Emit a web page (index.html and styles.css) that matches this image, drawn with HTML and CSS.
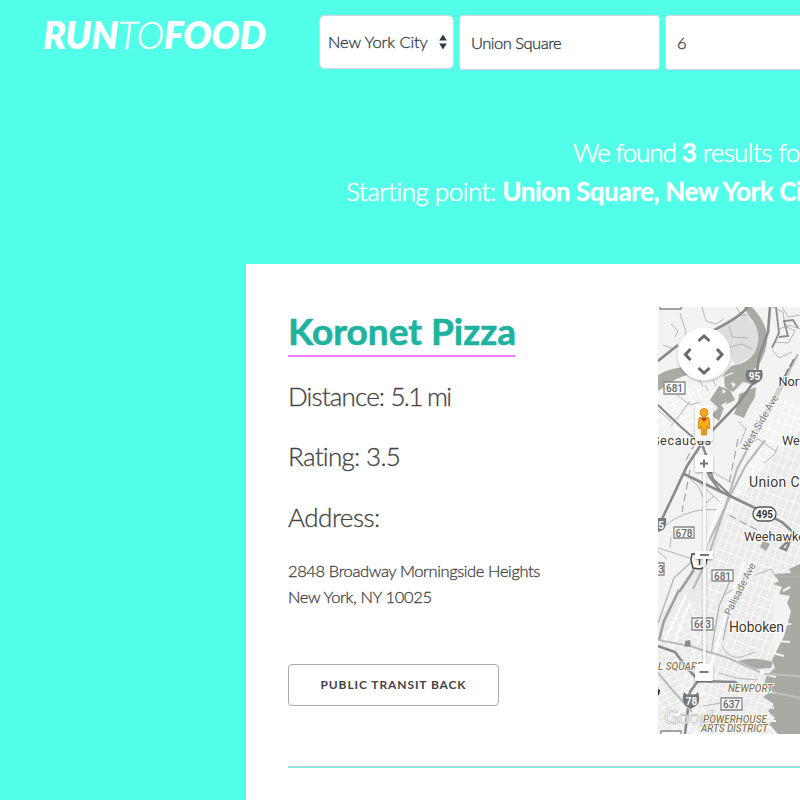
FILE: index.html
```html
<!DOCTYPE html>
<html lang="en">
<head>
<meta charset="utf-8">
<title>RunToFood</title>
<link rel="stylesheet" href="styles.css">
</head>
<body>
<header class="topbar">
  <a class="logo"><b>RUN</b><span>TO</span><b>FOOD</b></a>
  <form class="search">
    <div class="field city"><span class="t-city">New York City</span>
      <svg class="arrows" width="8" height="16" viewBox="0 0 8 16"><path d="M4 0.5 7.8 6.5H.2zM4 15.5 7.8 9.500H.2z"/></svg>
    </div>
    <div class="field start"><span class="t-start">Union Square</span></div>
    <div class="field miles"><span>6</span></div>
  </form>
</header>
<section class="summary">
  <p class="found">We found <b>3</b><span> results for</span></p>
  <p class="point"><span>Starting point: </span><b>Union Square, New York City</b></p>
</section>
<main class="card">
  <article class="result">
    <div class="info">
      <h2>Koronet Pizza</h2>
      <p class="row distance">Distance: <span>5.1 mi</span></p>
      <p class="row rating">Rating: 3.5</p>
      <p class="row label">Address:</p>
      <address><span class="street">2848 Broadway Morningside Heights</span><br><span class="zip">New York, NY 10025</span></address>
      <a class="button">PUBLIC TRANSIT BACK</a>
    </div>
    <svg class="map" width="142" height="427" viewBox="658 307 142 427">
      <defs>
        <pattern id="grid" width="7" height="10" patternUnits="userSpaceOnUse" patternTransform="rotate(20)"><path d="M0 0V10M0 0H7" fill="none" stroke="#fff" stroke-width="1.5"/></pattern>
        <pattern id="grid2" width="9" height="6" patternUnits="userSpaceOnUse" patternTransform="rotate(-28)"><path d="M0 0V6M0 0H9" fill="none" stroke="#fff" stroke-width="1.3"/></pattern>
        <filter id="shadow" x="-30%" y="-30%" width="160%" height="160%"><feDropShadow dx="0" dy="1" stdDeviation="1.2" flood-opacity=".35"/></filter>
      </defs>
      <rect x="658" y="307" width="142" height="427" fill="#f3f3f3"/>
      <path fill="#ebebeb" d="M735 500 800 430V560L775 590 772 734H658V620L700 560z"/>
      <path fill="url(#grid)" d="M740 470 775 400H800V560L775 590 772 734H672L700 600z"/>
      <path fill="url(#grid2)" d="M658 390 700 385 715 400 690 435 658 425zM658 630 695 600 710 734H658z"/>
      <path fill="#dedede" d="M716 327 743 311 757 327 759 345 752 356 735 366 728 348z"/>
      <!-- water -->
      <path fill="#a9aaa3" d="M744 307H752Q769 325 767 343 763 366 747 375L733 372 722 377 731 366Q752 363 757 347 762 330 749 316z"/>
      <path fill="#a9aaa3" d="M658 375Q670 368 684 367L690 374Q676 378 669 384L658 391z"/>
      <path fill="#a9aaa3" d="M724 377 737 372 746 379 733 392 725 387zM739 394 756 387 755 397 748 409 744 418 734 414 738 404zM719 386 730 390 735 400 725 405 719 421 711 415 718 408 710 400zM731 370l16 3 7 12-14-4z"/>
      <path fill="#f2f2f2" d="M722 389l4 2-3 3zM731 382l5 2-3 4zM721 405l6-3-2 8zM739 389l4-2 1 6z"/>
      <path fill="#a9aaa3" d="M800 564 789 569 791 573 774 574 779 581 773 584 782 587 779 594 790 596 787 603 791 611 788 622 784 636 779 646 772 660 775 668 767 675 764 684 770 692 763 697 774 704 768 711 775 718 769 724 778 734H800z"/>
      <path fill="#a9aaa3" d="M738 661Q753 656 773 662L771 668 756 669zM763 541 770 544 766 551 760 547z"/>
      <path fill="none" stroke="#f2f2f2" stroke-width="2.200" d="M783 591 790 587M778 641 790 642M773 653 784 656M764 674 776 677M762 690 776 693M764 706 774 708M765 721 776 721M781 612h8M784 624h7"/>
      <path fill="none" stroke="#bfc0bb" stroke-width="2" d="M764 674 800 676M772 692 800 698"/>
      <!-- minor roads -->
      <g fill="none" stroke="#b5b5b5" stroke-width="1">
        <path d="M671 324 678 331 675 337M663 345 674 349M680 313 686 332 684 340M702 307 706 321 716 324 724 319M729 326 732 337 748 338M727 348 742 344 752 349M772 350 779 358 792 352M705 385 708 391M713 380 716 386"/>
        <path d="M671 426 682 412 690 401M658 410 671 421M677 395 690 405 700 402M697 375 703 387M658 531 673 520Q695 507 718 510M658 548 671 552 698 561M671 537 670 548M658 551 667 559M685 474 698 486 706 503 714 496M693 477 722 504M711 471 732 483"/>
        <path d="M736 307 742 316 751 313M772 307 783 312 785 326 795 331 788 343 774 342M779 329 789 325 800 329M782 307 788 317 800 315M738 421 746 429 740 444M751 444 758 439 777 452M764 463 774 455 778 446"/>
        <path d="M755 575 771 569 776 577 800 576M724 595 744 583 752 571M722 645Q728 660 742 657L755 652M719 673 736 678 758 680M703 706 721 703 743 707"/>
      </g>
      <path fill="none" stroke="#8c8c8c" stroke-width="1.800" d="M776 307 779 333 772 348M779 337 788 336 784 321 793 320 798 328"/>
      <path fill="none" stroke="#a4a4a4" stroke-width="1.200" stroke-dasharray="8 4" d="M690 470 682 512M686 460 696 442M738 439 729 484M729 515 757 530"/>
      <!-- rail and avenues -->
      <g fill="none" stroke="#b9b9b9" stroke-width="2.200">
        <path d="M798 354 780 388 756 433 737 469 726 505 707 560 693 589"/>
        <path stroke="#d0d0d0" stroke-width="5" d="M789 370 777 394 752 440"/>
        <path d="M765 440 746 465 731 494 718 523 701 557 681 590"/>
        <path stroke="#fff" stroke-width="2" d="M724 492 711 530 699 568M745 562 728 607 707 678M686 595 664 642M690 602 669 655"/>
        <path stroke-width="1.500" d="M750 566 731 604 723 640M732 576 719 606 711 654M658 623 674 578 699 555"/>
      </g>
      <path fill="none" stroke="#777" stroke-width="1.500" stroke-dasharray="9 2" d="M794 359 788 370 781 384"/>
      <!-- highways -->
      <g fill="none" stroke="#8a8a8a" stroke-width="2.600">
        <path d="M658 361 678 345M703 335Q736 321 748 307M770 307 768 332 759 357 756 379 737 405 706 437 687 466 673 496 660 523"/>
        <path stroke-width="2.200" d="M658 405 681 427 703 446 713 479 729 494M700 440 707 457 709 476 721 492"/>
        <path d="M684 474 707 485 728 495 755 508 782 522 795 534 787 542 781 548 786 550 790 541 785 537"/>
        <path d="M658 646 675 652 686 667 699 681 735 682 745 689M700 678 690 692 685 734"/>
        <path stroke="#a0a0a0" d="M679 590 664 621 659 640M694 570 679 592"/>
        <path stroke="#bbb" stroke-width="2" d="M658 640 690 646 728 658 760 672M658 673 675 693 692 712"/>
      </g>
      <path fill="#8d8d87" d="M685 641l5-1 1 6-6 1z"/>
      <!-- road shields -->
      <g class="shield">
        <g fill="#fafafa" stroke="#888" stroke-width="1.300"><path d="M660 300h21v9h-21zM664 382h21v12h-21zM674 527h20v11h-20zM712 570h21v11h-21zM692 618h21v12h-21zM721 698h21v12h-21zM650 563h14v12h-14zM661 731h20v10h-20z"/></g>
        <text x="674.500" y="392">681</text><text x="684" y="536.500">678</text><text x="722.500" y="579.500">681</text><text x="702.500" y="628">663</text><text x="731.500" y="708">637</text><text x="661" y="573">3</text>
        <rect x="753" y="507" width="23" height="14" rx="7" fill="#fff" stroke="#555" stroke-width="1.300"/><text class="dark" x="764.500" y="517.500">495</text>
        <path d="M692 554h12l3 4-2 9-5 2-7-1-2-8z" fill="#fff" stroke="#444" stroke-width="1.500"/><text class="dark" x="699" y="565">1</text>
        <path fill="#777" d="M747 370h15q2 8-2 11l-6 4-6-4q-4-4-1-11zM684 692l2 2q5 1 10 0l2-2q3 10-1 13l-6 4-6-4q-4-4-1-13zM658 518h8q1 9-3 12l-5 2z"/>
        <text class="light" x="754.500" y="380">95</text><text class="light" x="691.500" y="705">78</text><text class="light" x="661" y="529">5</text>
      </g>
      <text class="google" x="664" y="724" textLength="60">Google</text>
      <!-- place names -->
      <g class="place">
        <text x="652" y="445" textLength="59">Secaucus</text><text x="778.500" y="385.500">North Bergen</text><text x="782" y="445">West New York</text><text class="big" x="749" y="487" letter-spacing=".35">Union City</text><text x="744" y="540.500">Weehawken</text><text class="big" x="729" y="632" textLength="55">Hoboken</text>
      </g>
      <g class="street-name"><text transform="translate(747 452) rotate(-60)">West Side Ave</text><text transform="translate(730 616) rotate(-63)">Palisade Ave</text></g>
      <g class="district"><text x="658" y="669.500">L SQUARE</text><text x="728" y="692" textLength="45">NEWPORT</text><text x="703" y="722.500" textLength="64">POWERHOUSE</text><text x="701" y="732" textLength="67">ARTS DISTRICT</text></g>
      <path d="M658 689l2 1-1 5h-1z" fill="#222"/>
      <!-- controls -->
      <g filter="url(#shadow)" fill="#fff"><circle cx="704" cy="354" r="26.500"/><rect x="695" y="405" width="18" height="36" rx="2" fill-opacity=".88"/><rect x="695" y="455" width="18" height="17" rx="1.500"/><path d="M703 472h3v192h-3z" fill-opacity=".8"/><rect x="695" y="551" width="18" height="8" rx="1"/><rect x="695" y="664" width="18" height="17" rx="1.500"/></g>
      <path fill="none" stroke="#696969" stroke-width="3" d="M698.500 341 704 336l5.500 5M698.500 368 704 373l5.500-5M690.500 349 685.500 354.500l5 5.500M717 349l5 5.500-5 5.500"/>
      <path fill="none" stroke="#777" stroke-width="2" d="M700 463.500h8M704 459.500v8M700 555h9M699.500 672h9"/>
      <g stroke="#c17b0b" stroke-width=".8" fill="#f5ac1b"><path d="M699 418q5-3 10 0l1 10-2 1-1-3-.5 9h-2l-.5-6-.5 6h-2L701 426l-1 3-2-1z"/><circle cx="704" cy="412.500" r="4"/><path d="M701 418h6l-3 4z" fill="#c83421" stroke="none"/></g>
    </svg>
  </article>
  <hr>
</main>
</body>
</html>
```
FILE: styles.css
```css
* { box-sizing: border-box; }
html { overflow: hidden; }
body {
  margin: 0;
  width: 800px;
  height: 800px;
  overflow: hidden;
  background: #52ffe8;
  color: #444;
  font-family: Lato, "Open Sans", sans-serif;
  white-space: nowrap;
}
p, h2 { margin: 0; }
.topbar { display: flex; align-items: flex-start; height: 133px; padding: 15px 0 0 43px; }
.logo {
  width: 276px;
  flex: none;
  color: #fff;
  font-size: 37.5px;
  line-height: 40px;
  font-style: italic;
  letter-spacing: -.35px;
}
.logo b { font-weight: 800; }
.logo span { font-weight: 300; -webkit-text-stroke: .4px; }
.search { display: flex; gap: 5px; flex: none; color: #2e3b48; font-size: 16.5px; font-weight: 300; -webkit-text-stroke: .3px; }
.field {
  display: flex;
  align-items: center;
  height: 55px;
  padding-left: 11px;
  background: #fff;
  border: 1px solid #d9d5d9;
  border-radius: 4px;
}
.city { width: 135px; height: 54px; padding: 0 6px 0 8px; justify-content: space-between; border-radius: 6px; }
.start { width: 201px; }
.miles { width: 202px; }
.t-city { letter-spacing: -.1px; }
.t-start { letter-spacing: -.5px; }
.arrows { fill: #2e3b48; }
.summary { height: 131px; color: #fff; font-size: 26px; line-height: 39px; font-weight: 300; -webkit-text-stroke: .5px; }
.summary b { font-weight: 700; letter-spacing: -.4px; -webkit-text-stroke: .3px; }
.found { padding-left: 573px; letter-spacing: -1.1px; }
.found span { letter-spacing: -.6px; }
.point { padding-left: 346px; }
.point span { letter-spacing: -.5px; }
.card { width: 1108px; height: 600px; margin-left: 246px; padding: 43px 42px 0; background: #fff; }
.result { display: flex; height: 459px; }
.info { width: 370px; flex: none; }
.info h2 {
  width: 227px;
  height: 50px;
  border-bottom: 2px solid #f77aff;
  color: #1eb39f;
  font-size: 37px;
  line-height: 47px;
  font-weight: 700;
  -webkit-text-stroke: .6px;
}
.row { font-size: 26px; line-height: 40px; margin-top: 20.500px; font-weight: 300; -webkit-text-stroke: .3px; }
.distance { margin-top: 18.500px; letter-spacing: -.85px; }
.distance span { letter-spacing: -1.7px; }
.rating { letter-spacing: -.7px; }
.label { letter-spacing: -.5px; }
address { margin-top: 21px; font-style: normal; font-size: 16.500px; line-height: 26px; font-weight: 300; -webkit-text-stroke: .3px; }
.street { letter-spacing: -.39px; }
.zip { letter-spacing: -.35px; }
.button {
  display: flex;
  align-items: center;
  justify-content: center;
  width: 211px;
  height: 42px;
  margin-top: 54px;
  border: 1px solid #aaa;
  border-radius: 4px;
  font-size: 12px;
  font-weight: 700;
  letter-spacing: .9px;
}
.map { display: block; flex: none; }
hr { height: 2px; margin: 0; border: 0; border-top: 1px solid #c5d4d4; background: #6bf3e2; }
.map text { font-family: Roboto, sans-serif; }
.shield text { font-size: 10px; font-weight: 500; text-anchor: middle; fill: #666; }
.shield .dark { fill: #333; font-weight: 700; }
.shield .light { fill: #fff; font-weight: 700; }
.place text { font-size: 12.700px; fill: #40392c; stroke: #fff; stroke-width: 2px; paint-order: stroke; }
.place .big { font-size: 14px; }
.street-name text { font-size: 10px; fill: #777; stroke: #f4f4f4; stroke-width: 2px; paint-order: stroke; }
.district text { font-size: 10px; font-style: italic; font-weight: 500; fill: #8a7a58; stroke: #fff; stroke-width: 1.500px; paint-order: stroke; }
.map .google { font-family: Lato, sans-serif; font-size: 20px; fill: #fff; fill-opacity: .85; stroke: #b5b5b5; stroke-width: .6px; }
```
